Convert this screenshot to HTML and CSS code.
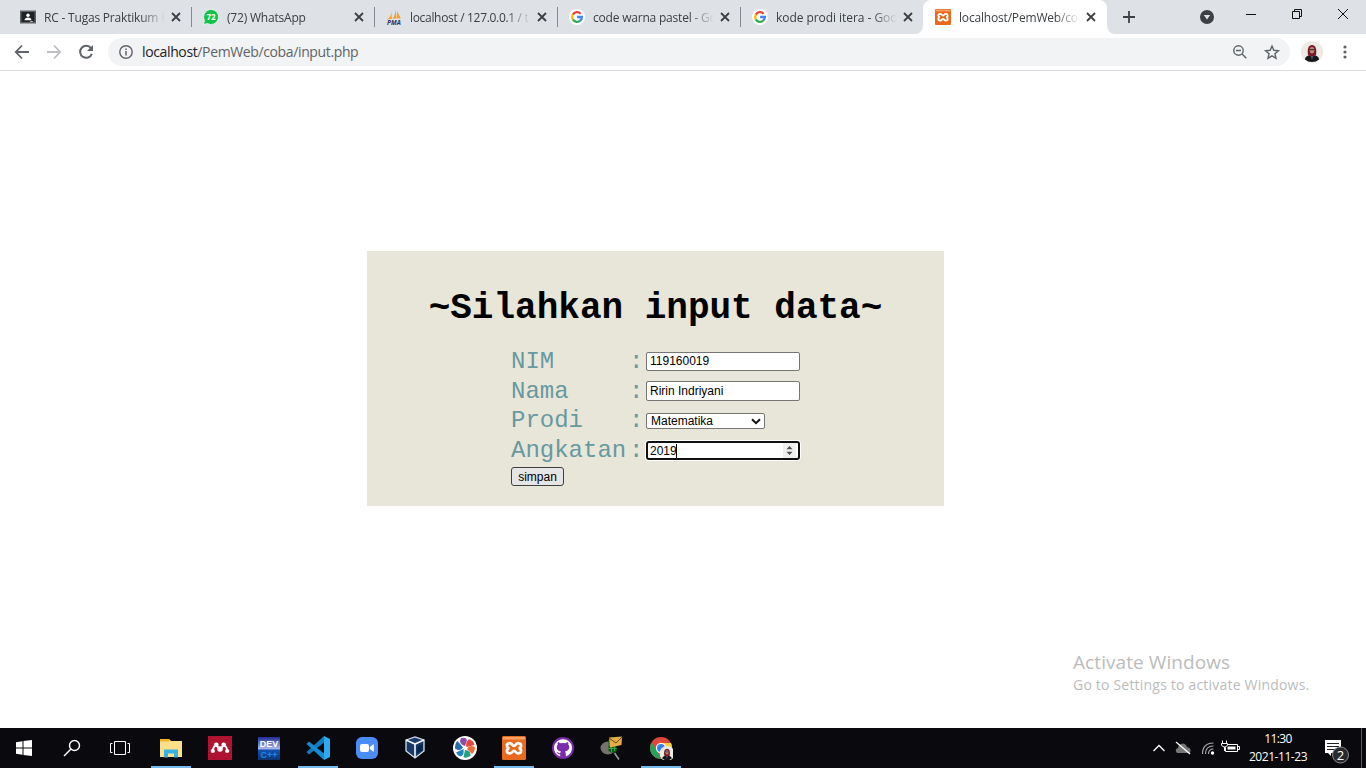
FILE: index.html
```html
<!DOCTYPE html>
<html lang="id">
<head>
<meta charset="utf-8">
<title>localhost/PemWeb/coba/input.php</title>
<link rel="stylesheet" href="styles.css">
</head>
<body>
<svg width="0" height="0" class="defs">
  <defs>
    <symbol id="close" viewBox="0 0 10 10"><path d="M1 1l8 8M9 1l-8 8" stroke="#3c4043" stroke-width="1.8" fill="none"/></symbol>
    <symbol id="google" viewBox="0 0 16 16"><circle cx="8" cy="8" r="8" fill="#fff"/><g fill="none" stroke-width="2.3"><path d="M3.8 5.6A4.9 4.9 0 0 1 11.6 4.7" stroke="#ea4335"/><path d="M3.8 10.4a4.9 4.9 0 0 1 0-4.8" stroke="#fbbc05"/><path d="M3.8 10.4a4.9 4.9 0 0 0 7.6 1.1" stroke="#34a853"/><path d="M8.1 8h4.8a4.7 4.7 0 0 1-1.7 3.7" stroke="#4285f4"/></g></symbol>
    <symbol id="xampp" viewBox="0 0 24 24"><rect width="24" height="24" rx="1.5" fill="#e9691f"/><path d="M1 1h22v2.500H1z" fill="#f7a266"/><path d="M7.500 7.200c2.500-.4 2.700 2.600 4.500 2.600s2-3 4.500-2.600c3.600.5 3.200 4.400.3 5.100 2.900.7 3.300 4.600-.3 5.100-2.500.4-2.700-2.600-4.500-2.600s-2 3-4.500 2.600c-3.600-.5-3.200-4.400-.3-5.100-2.900-.7-3.300-4.600.3-5.100z" fill="none" stroke="#fff" stroke-width="2.700"/></symbol>
    <symbol id="person" viewBox="0 0 22 22"><circle cx="11" cy="11" r="11" fill="#eceae4"/><path d="M4 18.500c0-2.500 2.500-4.500 7-4.500s7 2 7 4.500a11 11 0 0 1-14 0z" fill="#15171b"/><path d="M7 14C6 8 7.500 4 11 4s5 4 4 10l-4 2z" fill="#7a182b"/><ellipse cx="11" cy="9.300" rx="2.300" ry="3.200" fill="#b98c74"/><path d="M8.500 8.700h5" stroke="#292020"/><path d="M10 15h2l-1 4z" fill="#53687c"/></symbol>
  </defs>
</svg>
<div class="screen">
  <header class="tabstrip">
    <div class="tab">
      <svg class="fav" viewBox="0 0 16 16"><path d="M0 1.500h16v13H0z" fill="#5f6368"/><path d="M1.500 3h13v10h-13z" fill="#202124"/><circle cx="8" cy="6.200" r="1.700" fill="#fff"/><path d="M4.500 11.300c0-3.600 7-3.600 7 0z" fill="#fff"/><path d="M10 12h3v1h-3z" fill="#aaa"/></svg>
      <span class="title t1">RC - Tugas Praktikum P</span><svg class="x"><use href="#close"/></svg>
    </div>
    <div class="tab">
      <svg class="fav" viewBox="0 0 16 16"><path d="M8 .5a7.500 7.500 0 1 1-3.600 14L.5 15.500l1-4A7.500 7.500 0 0 1 8 .5z" fill="#14c14b" stroke="#fff" stroke-width=".7"/><text x="8" y="11" class="wa">72</text></svg>
      <span class="title t2">(72) WhatsApp</span><svg class="x"><use href="#close"/></svg>
    </div>
    <div class="tab">
      <svg class="fav" viewBox="0 0 16 16"><path d="M5.500 2C5.500 6 4 9 1 10.500l4.800-.7zM9.500 0c0 4-.8 7-3 9.800l4-.3zM11 2l3.800 7.300-3.800.3z" fill="#f89c2a"/><text x="8" y="15.500" class="pma">PMA</text></svg>
      <span class="title t3">localhost / 127.0.0.1 / t</span><svg class="x"><use href="#close"/></svg>
    </div>
    <div class="tab">
      <svg class="fav"><use href="#google"/></svg>
      <span class="title t4">code warna pastel - Go</span><svg class="x"><use href="#close"/></svg>
    </div>
    <div class="tab last">
      <svg class="fav"><use href="#google"/></svg>
      <span class="title t5">kode prodi itera - Goo</span><svg class="x"><use href="#close"/></svg>
    </div>
    <div class="tab active">
      <svg class="fav"><use href="#xampp"/></svg>
      <span class="title t6">localhost/PemWeb/cob</span><svg class="x"><use href="#close"/></svg>
    </div>
    <svg class="controls" viewBox="0 0 259 34"><path d="M16 17h12M22 11v12" stroke="#3c4043" stroke-width="1.800"/><circle cx="100" cy="17" r="7" fill="#3c4043"/><path d="M96.800 15h6.400l-3.200 4.500z" fill="#dee1e6"/><g fill="none" stroke="#111"><path d="M139 14.500h10M185.500 11.500h7v7h-7zM187.500 11.500v-2h7v7h-2"/><path d="M231 9l10 10M241 9l-10 10"/></g></svg>
  </header>
  <nav class="toolbar">
    <svg class="navicons" viewBox="0 0 108 36"><g fill="none" stroke-width="1.800"><path d="M29 18H16M22 11.500L15.800 18l6.200 6.500" stroke="#5f6368"/><path d="M47 18h13M54 11.500l6.200 6.500-6.200 6.500" stroke="#bcbec1"/><path d="M91 14.300A6 6 0 1 0 91.800 19.800" stroke="#5f6368" stroke-width="2"/></g><path d="M93 11v6h-6z" fill="#5f6368"/></svg>
    <div class="omnibox">
      <svg class="info" viewBox="0 0 14 14"><circle cx="7" cy="7" r="6.200" fill="none" stroke="#5f6368" stroke-width="1.400"/><path d="M7 6v4.500M7 3.500V5" stroke="#5f6368" stroke-width="1.500"/></svg>
      <span class="url"><b>localhost</b>/PemWeb/coba/input.php</span>
      <svg class="boxicons" viewBox="0 0 50 16"><g fill="none" stroke="#5f6368" stroke-width="1.400"><circle cx="6.500" cy="6.500" r="4.700"/><path d="M9.800 9.800l4.500 4.500M4 6.500h5"/><path d="M40 2l1.800 4.300 4.600.4-3.500 3 1.100 4.600-4-2.500-4 2.500 1.100-4.600-3.500-3 4.600-.4z"/></g></svg>
    </div>
    <svg class="avatar"><use href="#person"/></svg>
    <svg class="menu" viewBox="0 0 4 14"><g fill="#5f6368"><circle cx="2" cy="2" r="1.600"/><circle cx="2" cy="7" r="1.600"/><circle cx="2" cy="12" r="1.600"/></g></svg>
  </nav>
  <main class="page">
    <form class="card">
      <h1>~Silahkan input data~</h1>
      <div class="fields">
        <label for="nim">NIM</label><i>:</i><input id="nim" class="field" value="119160019">
        <label for="nama">Nama</label><i>:</i><input id="nama" class="field tall" value="Ririn Indriyani">
        <label for="prodi">Prodi</label><i>:</i><div class="choice"><select id="prodi"><option>Matematika</option></select><svg class="chev" viewBox="0 0 10 7"><path d="M1 1.200l4 4 4-4" fill="none" stroke="#111" stroke-width="2"/></svg></div>
        <label for="angkatan">Angkatan</label><i>:</i><div class="number"><input id="angkatan" value="2019"><span class="caret"></span><svg class="spin" viewBox="0 0 13 15"><path d="M0 0h13v15H0z" fill="#efefef"/><path d="M3.500 6.300h6L6.500 3zM3.500 8.700h6L6.500 12z" fill="#505050"/></svg></div>
      </div>
      <button type="button" class="save">simpan</button>
    </form>
    <aside class="watermark"><p class="wm1">Activate Windows</p><p class="wm2">Go to Settings to activate Windows.</p></aside>
  </main>
  <footer class="taskbar">
    <div class="sys"><svg viewBox="0 0 24 24" width="24" height="24"><path d="M4 6.200l6.500-1v6.300H4zM11.500 5L20 4v7.500h-8.500zM4 12.500h6.500v6.300l-6.500-1zM11.500 12.500H20V20l-8.500-1z" fill="#fff"/></svg></div>
    <div class="sys"><svg viewBox="0 0 24 24" width="24" height="24"><g fill="none" stroke="#fff" stroke-width="1.400"><circle cx="14.500" cy="9.500" r="5"/><path d="M11 13l-7 7"/></g></svg></div>
    <div class="sys"><svg viewBox="0 0 24 24" width="24" height="24"><path d="M6.500 5.500h11v13h-11zM4.500 7.500h-2v9h2M19.500 7.500h2v9h-2" fill="none" stroke="#fff"/></svg></div>
    <div class="apps">
      <div class="app run"><svg viewBox="0 0 24 24"><path d="M1 3h9l2 2h11v16H1z" fill="#ffe08a"/><path d="M1 3h9v2.500H1z" fill="#f2b51d"/><path d="M5 21.500v-8h14v8h-4v-4H9v4z" fill="#38b1e3"/></svg></div>
      <div class="app"><svg viewBox="0 0 24 24"><path d="M0 0h24v24H0z" fill="#b01330"/><path d="M4.800 15q.2-4 3-6l4.200 4 4.200-4q2.800 2 3 6" fill="none" stroke="#fff" stroke-width="1.800"/><g fill="#fff"><circle cx="8.300" cy="8.800" r="2.300"/><circle cx="15.700" cy="8.800" r="2.300"/><circle cx="12" cy="13" r="2.800"/><circle cx="4.800" cy="15" r="2.100"/><circle cx="19.200" cy="15" r="2.100"/></g></svg></div>
      <div class="app"><svg viewBox="0 0 24 24"><defs><linearGradient id="dev" x2="0" y2="1"><stop stop-color="#202c91"/><stop offset=".5" stop-color="#a9b5ed"/><stop offset=".58" stop-color="#1452ae"/><stop offset="1" stop-color="#10346e"/></linearGradient></defs><path d="M1 1h22v23H1z" fill="url(#dev)"/><text x="12" y="11" class="dev">DEV</text><text x="12" y="22" class="cpp">C++</text></svg></div>
      <div class="app run"><svg viewBox="0 0 24 24"><path d="M18 0v6.500L3 18.500.5 16z" fill="#147bbd"/><path d="M18 24v-6.500L3 5.500.5 8z" fill="#168ad3"/><path d="M18 0l6 3v18l-6 3z" fill="#2daaf1"/></svg></div>
      <div class="app"><svg viewBox="0 0 24 24"><rect x="1" y="1" width="22" height="22" rx="6" fill="#4a8cfa"/><rect x="5" y="8" width="9" height="8" rx="2" fill="#fff"/><path d="M14.800 11l4-3v8l-4-3z" fill="#fff"/></svg></div>
      <div class="app"><svg class="cube" viewBox="0 0 24 24"><path d="M3 4l9-3 9 3v11l-9 7-9-7z" fill="#173a69" stroke="#d5dfed" stroke-width="1.300"/><path d="M3 4l9 4 9-4M12 8v13" fill="none" stroke="#f4f7fb" stroke-width="1.600"/><path d="M14 10.500l5.500-2.500v6L14 18z" fill="#0a2548"/></svg></div>
      <div class="app"><svg viewBox="0 0 24 24"><circle cx="12" cy="12" r="12" fill="#fff"/><path d="M12 10Q5 8 8 2q5-1 6 2z" fill="#8b4bb0"/><path d="M13.500 11Q12 6 16 3q5 2 5.500 6z" fill="#e24a3b"/><path d="M14 13q2-5 8-2 0 5-3 7z" fill="#ee6d38"/><path d="M12 14q6 0 5.500 6-5 3-7 1z" fill="#22a283"/><path d="M10.500 13q1 6-3 7.500-4-2-4.500-4z" fill="#2283bd"/><path d="M10 11.500Q7 16 2 12.500 2 7 4.500 5z" fill="#226eb2"/></svg></div>
      <div class="app run"><svg><use href="#xampp"/></svg></div>
      <div class="app"><svg viewBox="0 0 24 24"><circle cx="12" cy="12" r="11" fill="#792cab"/><path d="M12 3.200a8.800 8.800 0 0 0-2.800 17.200v-2.200c-2.600.5-3-1.500-3.800-2.200 2-.2 2 1.800 3.900 1 .1-.8.400-1.200.8-1.500-5.200-.8-5-5.600-3.300-7-.3-1 0-2 .2-2.300 1.200 0 2 .7 2.500 1q2.500-.6 5 0c.6-.4 1.400-1 2.500-1 .3.400.5 1.300.2 2.300 1.700 1.500 1.900 6.200-3.300 7 .6.500.9 1.300.9 2.400v2.500A8.800 8.800 0 0 0 12 3.200z" fill="#fff"/></svg></div>
      <div class="app"><svg viewBox="0 0 24 24"><ellipse cx="8" cy="12" rx="7.500" ry="6.500" fill="#77716b"/><path d="M14.500 17l4.500 6.500" stroke="#999" stroke-width="1.600"/><path d="M8.500 4h8v12q-4 2-8-1z" fill="#075b18"/><path d="M8.500 9h8M8.500 12.500h8M11.500 5v11M14.500 5v10" stroke="#39a93a"/><path d="M9 2l13-1-.5 8.500L10 12z" fill="#e2ad46" transform="translate(0 -.5)"/><path d="M9 2l7 5 6-6" fill="none" stroke="#694719"/></svg></div>
      <div class="app run"><svg viewBox="0 0 24 24"><circle cx="12" cy="12" r="11" fill="#de493b"/><path d="M2.500 6.500l6 9L12 23A11 11 0 0 1 2.500 6.500z" fill="#24a15d"/><path d="M12 7h10A11 11 0 0 1 12 23l5-8z" fill="#fdcf3a"/><circle cx="12" cy="12" r="5.200" fill="#fff"/><circle cx="12" cy="12" r="4" fill="#3b7eea"/><use href="#person" x="10.500" y="10" width="15" height="15"/></svg></div>
    </div>
    <svg class="tray" viewBox="0 0 100 40"><path d="M7.500 23l5.500-5.500 5.500 5.500" fill="none" stroke="#fff" stroke-width="1.300"/><path d="M31 25h13q2-5-3-6-2-5-6-3-3 1-3 4-4 1-1 5z" fill="#777"/><path d="M30 14l14 12" stroke="#fff" stroke-width="1.300"/><g fill="none" stroke="#aaa" stroke-width="1.200"><path d="M56.500 26q0-11 11-11M59.500 26q0-8 8-8M62.500 26q0-5 5-5"/></g><circle cx="66.500" cy="25" r="1.700" fill="#fff"/><path d="M79.500 16.500h12v7h-12zM91.500 18.500h2v3h-2" fill="none" stroke="#fff"/><path d="M81.500 18.500h8v3h-8z" fill="#fff"/><path d="M75 14h7v3.500q-.5 2-3.500 2t-3.500-2z" fill="#0a090d"/><path d="M76.500 12.500v3M80.500 12.500v3M75.500 15.500h6v1.500q-1 2-3 2t-3-2zM78.500 19v4" fill="none" stroke="#fff"/></svg>
    <div class="clock"><span>11:30</span><span class="date">2021-11-23</span></div>
    <svg class="notice" viewBox="-3 0 56 40"><path d="M12 12h16v13H18v3l-3-3h-3z" fill="#fff"/><path d="M14 15.500h12M14 18.500h12M14 21.500h8" stroke="#222"/><circle cx="27.500" cy="27" r="8" fill="#272a2e" stroke="#8a8a8a"/><text x="27.500" y="31.500" class="count">2</text><path d="M48.500 0v40" stroke="#565a5d"/></svg>
  </footer>
</div>
</body>
</html>
```
FILE: styles.css
```css
* { box-sizing: border-box; }
body { margin: 0; overflow: hidden; background: #fff; font-family: "Open Sans", "Noto Sans", sans-serif; }
svg { display: block; flex: none; }
.defs { position: absolute; }
.screen { width: 1366px; height: 768px; display: flex; flex-direction: column; }

.tabstrip { height: 34px; background: linear-gradient(#fff, #fff) 915px 26px / 200px 8px no-repeat #dee1e6; display: flex; padding-left: 8px; flex: none; }
.tab { width: 183px; height: 34px; display: flex; align-items: center; padding-left: 12px; flex: none;
  background: linear-gradient(#85898e, #85898e) 0 7px / 1px 20px no-repeat #dee1e6; }
.tab:first-child { background: #dee1e6; }
.tab.last { border-bottom-right-radius: 8px; }
.tab.active { width: 184px; background: radial-gradient(circle at 8px 8px, #fff 7.500px, #dee1e6 8.500px) 0 0 / 8px 8px no-repeat, radial-gradient(circle at 0 8px, #fff 7.500px, #dee1e6 8.500px) right 0 / 8px 8px no-repeat, #fff; }
.fav { width: 16px; height: 16px; margin-right: 8px; }
.title { width: 121px; overflow: hidden; white-space: nowrap; font-size: 12px; line-height: 18px; color: #3c4043; margin-right: 6px; padding-top: 1px;
  -webkit-mask-image: linear-gradient(90deg, #000 96px, transparent 121px); mask-image: linear-gradient(90deg, #000 96px, transparent 121px); }
.x { width: 10px; height: 10px; }
.t1 { letter-spacing: -.2px; }
.t2 { letter-spacing: -.2px; }
.t3 { letter-spacing: -.32px; }
.t4 { letter-spacing: -.2px; }
.t5 { letter-spacing: -.05px; }
.t6 { letter-spacing: -.18px; }
.controls { width: 259px; height: 34px; background: #dee1e6; border-bottom-left-radius: 8px; }
.wa { font: bold 8px "Open Sans", sans-serif; fill: #fff; text-anchor: middle; }
.pma { font: italic bold 6.500px "Open Sans", sans-serif; fill: #33335c; text-anchor: middle; }

.toolbar { height: 37px; border-bottom: 1px solid #d9dbde; display: flex; align-items: center; flex: none; }
.navicons { width: 108px; height: 36px; }
.omnibox { width: 1182px; height: 28px; border-radius: 14px; background: #f1f3f4; display: flex; align-items: center; padding: 0 8px 0 11px; }
.info { width: 14px; height: 14px; margin-right: 9px; }
.url { flex: 1; font-size: 14px; line-height: 20px; letter-spacing: -.37px; color: #5f6368; white-space: nowrap; }
.url b { font-weight: 400; color: #202124; }
.boxicons { width: 50px; height: 16px; }
.avatar { width: 22px; height: 22px; margin: 0 20px 0 11px; }
.menu { width: 4px; height: 14px; }

.page { flex: 1; position: relative; padding: 180px 0 0 367px; }
.card { width: 577px; height: 255px; background: #e7e6d9; padding: 35px 0 0; }
h1 { margin: 0 0 16px; text-align: center; font: bold 36px/45px "Courier New", "Liberation Mono", monospace; color: #000; }
.fields { display: grid; grid-template-columns: 118px 17px 154px; grid-template-rows: 30px 30px 29px 30px; align-items: center; margin-left: 144px; color: #6799a0; font: 24px/28px "Courier New", "Liberation Mono", monospace; }
.fields label, .fields i { margin-bottom: 1px; }
.fields i { font-style: normal; }
.fields input { width: 154px; height: 19px; border: 1px solid #767676; border-radius: 2px; padding: 1px 3px; background: #fff; font: 12px "Liberation Sans", Arial, sans-serif; color: #000; outline: 0; display: block; margin-bottom: 2px; }
.fields .tall { height: 20px; }
.choice { position: relative; width: 119px; margin-bottom: 2px; }
.choice select { display: block; width: 119px; height: 16px; appearance: none; border: 1px solid #767676; border-radius: 2px; background: #fff; font: 12px/14px "Liberation Sans", Arial, sans-serif; padding: 0 4px; color: #000; }
.chev { position: absolute; right: 4px; top: 5px; width: 10px; height: 7px; }
.number { position: relative; margin-bottom: 1px; }
.fields .number input { border: 2px solid #101010; border-radius: 3px; padding: 1px 2px 0; box-shadow: 0 0 0 1px #fff; margin-bottom: 0; }
.caret { position: absolute; left: 30px; top: 3px; width: 1px; height: 14px; background: #000; }
.spin { position: absolute; right: 4px; top: 2px; width: 13px; height: 15px; }
.save { display: block; margin: 1px 0 0 144px; width: 53px; height: 19px; padding: 0; border: 1px solid #3f3f3f; border-radius: 3px; background: #e5e5e5; font: 12px "Liberation Sans", Arial, sans-serif; color: #000; }
.watermark { position: absolute; left: 1073px; top: 578px; color: #bcbcbc; white-space: nowrap; }
.watermark p { margin: 0; }
.wm1 { font-size: 19px; line-height: 26px; letter-spacing: .08px; }
.wm2 { font-size: 14px; line-height: 20px; letter-spacing: .2px; }

.taskbar { height: 40px; background: #0a090d; display: flex; flex: none; color: #fff; }
.sys { width: 48px; height: 40px; display: grid; place-items: center; }
.apps { display: flex; padding-left: 3px; width: 1002px; }
.app { width: 49px; height: 40px; display: flex; justify-content: center; padding: 8px 1px 0 0; }
.app svg { width: 24px; height: 24px; }
.app .cube { margin-right: 3px; }
.run { background: linear-gradient(#76b9ed, #76b9ed) 4px 38px / 40px 2px no-repeat; }
.dev { font: bold 9px "Liberation Sans", sans-serif; fill: #fff; text-anchor: middle; }
.cpp { font: bold 9px "Liberation Sans", sans-serif; fill: #168bef; text-anchor: middle; }
.tray { width: 100px; height: 40px; }
.clock { width: 64px; padding: 2px 0 0; display: flex; flex-direction: column; align-items: center; font-size: 12px; line-height: 18px; letter-spacing: -.6px; white-space: nowrap; }
.clock .date { letter-spacing: -.45px; }
.notice { width: 56px; height: 40px; }
.count { font: 13px "Open Sans", sans-serif; fill: #fff; text-anchor: middle; }
```
